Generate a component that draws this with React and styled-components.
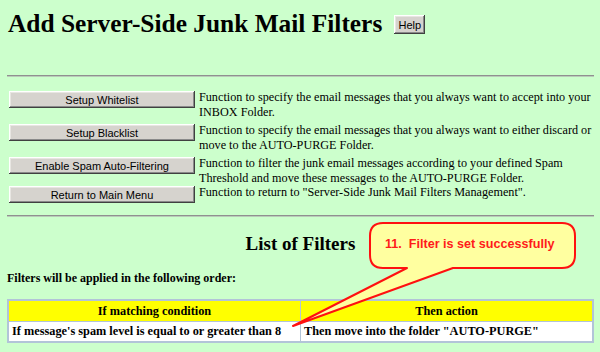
import React from 'react';
import styled, { createGlobalStyle } from 'styled-components';

const Global = createGlobalStyle`
  html, body { margin: 0; padding: 0; background: #ccffcc; }
  body { width: 600px; height: 352px; overflow: hidden; }
`;

const Page = styled.div`
  position: relative;
  width: 600px;
  height: 352px;
  box-sizing: border-box;
  padding: 8px 6px 0 7px;
  background: #ccffcc;
  font-family: "Liberation Serif", "Times New Roman", serif;
  color: #000;
`;

const TitleRow = styled.div`
  display: flex;
  align-items: center;
  gap: 12px;
  height: 30px;
  padding-left: 1px;
`;

const Title = styled.h1`
  margin: 0;
  font-size: 25.4px;
  line-height: 30px;
  font-weight: bold;
`;

const ClassicButton = styled.button`
  box-sizing: border-box;
  margin: 0;
  padding: 0 4px;
  background: #d6d3ce;
  border: none;
  border-radius: 0;
  box-shadow: inset -1px -1px #404040, inset 1px 1px #ffffff,
    inset -2px -2px #8a8a8a, inset 2px 2px #e8e6e2;
  font-family: "Liberation Sans", Arial, sans-serif;
  font-size: 11px;
  color: #000;
  cursor: default;
  white-space: nowrap;
`;

const HelpButton = styled(ClassicButton)`
  width: 31px;
  height: 19px;
  margin-top: 3px;
`;

const Rule = styled.hr`
  margin: ${p => p.$top}px 0 0 0;
  height: 0;
  border: none;
  border-top: 1px solid #909090;
  border-bottom: 1px solid #b8ccb8;
`;

const FuncList = styled.div`
  display: flex;
  flex-direction: column;
  padding-left: 2px;
  margin-top: 13px;
`;

const FuncRow = styled.div`
  display: grid;
  grid-template-columns: 186px 1fr;
  column-gap: 4px;
  align-items: start;
  margin-top: ${p => p.$gap}px;
`;

const FuncButton = styled(ClassicButton)`
  width: 186px;
  height: 17px;
  margin-top: 1px;
`;

const FuncDesc = styled.div`
  font-size: 12.2px;
  line-height: 14.5px;
`;

const SectionTitle = styled.h2`
  margin: 16px 0 0 0;
  text-align: center;
  font-size: 19px;
  line-height: 22px;
  font-weight: bold;
`;

const Note = styled.p`
  margin: 16px 0 0 0;
  font-size: 12px;
  line-height: 14px;
  font-weight: bold;
`;

const FilterTable = styled.table`
  margin-top: 14px;
  width: 587px;
  border-collapse: collapse;
  border: 2px solid #b2c4d8;
  font-size: 12.3px;
  font-weight: bold;
`;

const HeadCell = styled.th`
  width: 50%;
  height: 20px;
  padding: 0;
  background: #ffff00;
  border: 1px solid #b2c4d8;
  text-align: center;
  font-weight: bold;
`;

const BodyCell = styled.td`
  height: 19px;
  padding: 0 3px;
  background: #ffffff;
  border: 1px solid #b2c4d8;
  text-align: left;
`;

const Overlay = styled.svg`
  position: absolute;
  left: 0;
  top: 0;
  width: 600px;
  height: 352px;
  pointer-events: none;
`;

const CalloutText = styled.div`
  position: absolute;
  left: 385px;
  top: 237px;
  font-family: "Liberation Sans", Arial, sans-serif;
  font-size: 12.6px;
  line-height: 15px;
  font-weight: bold;
  color: #ff1a1a;
  white-space: pre;
`;

const funcs = [
  {
    label: 'Setup Whitelist',
    desc: 'Function to specify the email messages that you always want to accept into your INBOX Folder.',
    gap: 0,
  },
  {
    label: 'Setup Blacklist',
    desc: 'Function to specify the email messages that you always want to either discard or move to the AUTO-PURGE Folder.',
    gap: 4,
  },
  {
    label: 'Enable Spam Auto-Filtering',
    desc: 'Function to filter the junk email messages according to your defined Spam Threshold and move these messages to the AUTO-PURGE Folder.',
    gap: 4,
  },
  {
    label: 'Return to Main Menu',
    desc: 'Function to return to "Server-Side Junk Mail Filters Management".',
    gap: 0,
  },
];

export default function App() {
  return (
    <>
      <Global />
      <Page>
        <TitleRow>
          <Title>Add Server-Side Junk Mail Filters</Title>
          <HelpButton>Help</HelpButton>
        </TitleRow>
        <Rule $top={37} />
        <FuncList>
          {funcs.map(f => (
            <FuncRow key={f.label} $gap={f.gap}>
              <FuncButton>{f.label}</FuncButton>
              <FuncDesc>{f.desc}</FuncDesc>
            </FuncRow>
          ))}
        </FuncList>
        <Rule $top={12} />
        <SectionTitle>List of Filters</SectionTitle>
        <Note>Filters will be applied in the following order:</Note>
        <FilterTable>
          <thead>
            <tr>
              <HeadCell>If matching condition</HeadCell>
              <HeadCell>Then action</HeadCell>
            </tr>
          </thead>
          <tbody>
            <tr>
              <BodyCell>If message's spam level is equal to or greater than 8</BodyCell>
              <BodyCell>Then move into the folder "AUTO-PURGE"</BodyCell>
            </tr>
          </tbody>
        </FilterTable>
        <Overlay viewBox="0 0 600 352">
          <path
            d="M383,223 H562 Q575,223 575,236 V255 Q575,268 562,268 H453 L293,326 L407,268 H383 Q370,268 370,255 V236 Q370,223 383,223 Z"
            fill="#ffffa0"
            stroke="#ff1010"
            strokeWidth="2"
            strokeLinejoin="round"
          />
        </Overlay>
        <CalloutText>{'11.  Filter is set successfully'}</CalloutText>
      </Page>
    </>
  );
}
